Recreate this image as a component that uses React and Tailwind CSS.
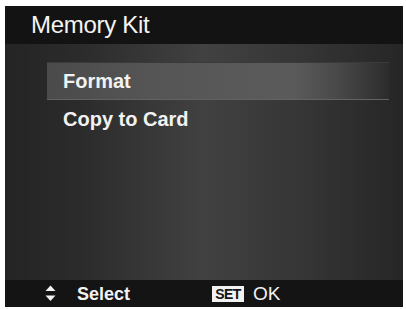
import React from 'react';

const font = { fontFamily: '"Liberation Sans", Arial, sans-serif' };

const UpDown = () => (
    <svg width="11" height="17" viewBox="0 0 11 17">
        <polygon points="5.5,0.5 10.5,6 0.5,6" fill="#f2f2f2" />
        <polygon points="0.5,10.5 10.5,10.5 5.5,16" fill="#f2f2f2" />
    </svg>
);

const App = () => {
    return (
        <div className="w-[406px] h-[309px] bg-white pt-[6px] pl-[5px] overflow-hidden" style={font}>
            <div className="w-[398px] h-[301px] flex flex-col bg-[#222]">
                {/* header */}
                <div className="h-[38px] bg-[#131313] flex items-center pl-[26px]">
                    <span className="text-[24px] leading-none text-[#f4f4f4] tracking-[-0.3px]">Memory Kit</span>
                </div>

                {/* menu */}
                <div className="flex-1 pt-[18px] bg-[linear-gradient(90deg,#242424_0%,#2c2c2c_20%,#414141_50%,#353535_75%,#262626_100%)]">
                    <div className="ml-[42px] w-[342px] h-[38px] flex items-center pl-[16px] border-t border-b border-t-[#3a3a3a] border-b-[#626262] bg-[linear-gradient(90deg,#4a4a4a_0%,#555555_30%,#5b5b5b_72%,#474747_86%,#2c2c2c_100%)]">
                        <span className="text-[20px] font-bold text-[#f2f2f2] leading-none">Format</span>
                    </div>
                    <div className="ml-[42px] h-[38px] flex items-center pl-[16px]">
                        <span className="text-[20px] font-bold text-[#f2f2f2] leading-none">Copy to Card</span>
                    </div>
                </div>

                {/* footer */}
                <div className="h-[27px] bg-[#141414] flex items-center pl-[40px]">
                    <UpDown />
                    <span className="ml-[21px] text-[18px] font-bold text-[#f2f2f2] leading-none">Select</span>
                    <span className="ml-[82px] w-[32px] h-[16px] flex items-center justify-center bg-[#f2f2f2] text-[#141414] text-[14px] font-bold leading-none tracking-[-0.5px]">SET</span>
                    <span className="ml-[9px] text-[19px] text-[#f2f2f2] leading-none">OK</span>
                </div>
            </div>
        </div>
    );
};

export default App;
